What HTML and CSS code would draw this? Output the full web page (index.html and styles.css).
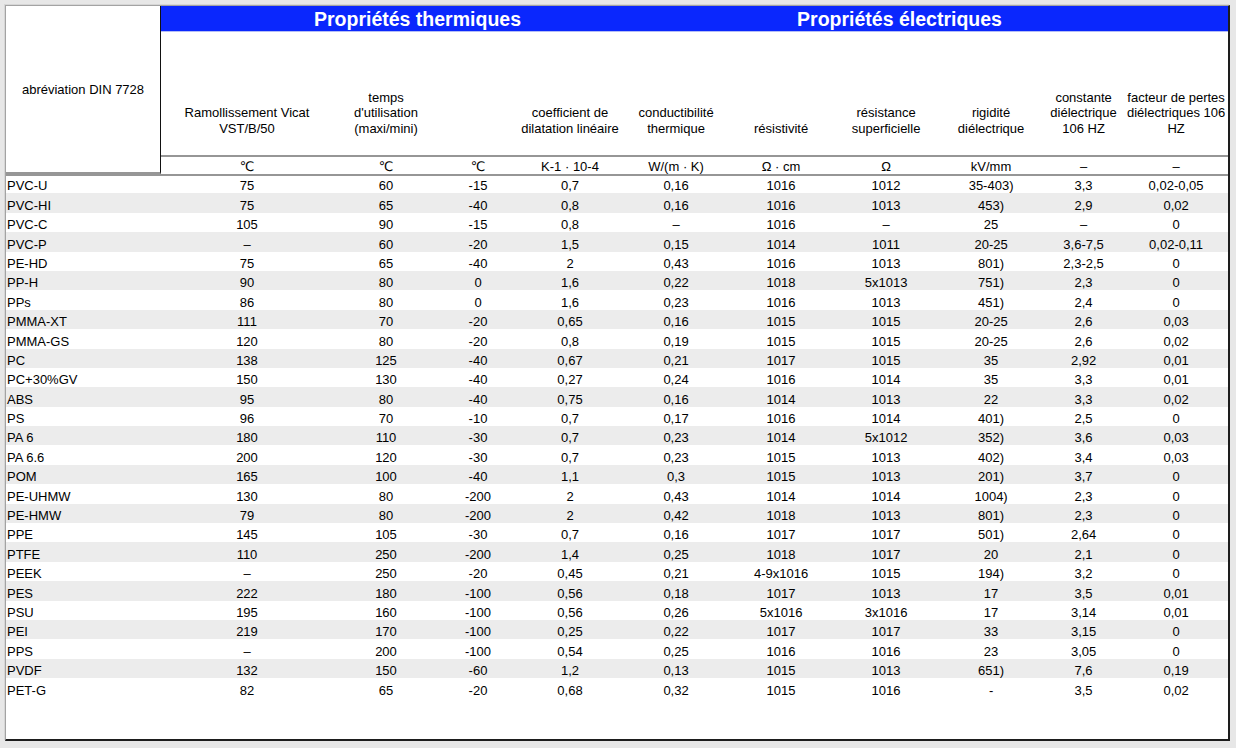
FILE: index.html
```html
<!DOCTYPE html>
<html lang="fr">
<head>
<meta charset="utf-8">
<title>Propriétés des plastiques</title>
<link rel="stylesheet" href="styles.css">
</head>
<body>
<div class="sheet">
<table class="grid">
<colgroup>
<col class="w0"><col class="w1"><col class="w2"><col class="w3"><col class="w4"><col class="w5"><col class="w6"><col class="w7"><col class="w8"><col class="w9"><col class="w10">
</colgroup>
<thead>
<tr class="band">
<th class="abbr" rowspan="3">abréviation DIN 7728</th>
<th class="title title-therm" colspan="5">Propriétés thermiques</th>
<th class="title title-elec" colspan="5">Propriétés électriques</th>
</tr>
<tr class="labels">
<th>Ramollissement Vicat<br>VST/B/50</th>
<th>temps<br>d'utilisation<br>(maxi/mini)</th>
<th></th>
<th>coefficient de<br>dilatation linéaire</th>
<th>conductibilité<br>thermique</th>
<th>résistivité</th>
<th>résistance<br>superficielle</th>
<th>rigidité<br>diélectrique</th>
<th>constante<br>diélectrique<br>106 HZ</th>
<th>facteur de pertes<br>diélectriques 106<br>HZ</th>
</tr>
<tr class="units">
<th>℃</th><th>℃</th><th>℃</th><th>K-1 · 10-4</th><th>W/(m · K)</th><th>Ω · cm</th><th>Ω</th><th>kV/mm</th><th>–</th><th>–</th>
</tr>
</thead>
<tbody>
<tr><td>PVC-U</td><td>75</td><td>60</td><td>-15</td><td>0,7</td><td>0,16</td><td>1016</td><td>1012</td><td>35-403)</td><td>3,3</td><td>0,02-0,05</td></tr>
<tr><td>PVC-HI</td><td>75</td><td>65</td><td>-40</td><td>0,8</td><td>0,16</td><td>1016</td><td>1013</td><td>453)</td><td>2,9</td><td>0,02</td></tr>
<tr><td>PVC-C</td><td>105</td><td>90</td><td>-15</td><td>0,8</td><td>–</td><td>1016</td><td>–</td><td>25</td><td>–</td><td>0</td></tr>
<tr><td>PVC-P</td><td>–</td><td>60</td><td>-20</td><td>1,5</td><td>0,15</td><td>1014</td><td>1011</td><td>20-25</td><td>3,6-7,5</td><td>0,02-0,11</td></tr>
<tr><td>PE-HD</td><td>75</td><td>65</td><td>-40</td><td>2</td><td>0,43</td><td>1016</td><td>1013</td><td>801)</td><td>2,3-2,5</td><td>0</td></tr>
<tr><td>PP-H</td><td>90</td><td>80</td><td>0</td><td>1,6</td><td>0,22</td><td>1018</td><td>5x1013</td><td>751)</td><td>2,3</td><td>0</td></tr>
<tr><td>PPs</td><td>86</td><td>80</td><td>0</td><td>1,6</td><td>0,23</td><td>1016</td><td>1013</td><td>451)</td><td>2,4</td><td>0</td></tr>
<tr><td>PMMA-XT</td><td>111</td><td>70</td><td>-20</td><td>0,65</td><td>0,16</td><td>1015</td><td>1015</td><td>20-25</td><td>2,6</td><td>0,03</td></tr>
<tr><td>PMMA-GS</td><td>120</td><td>80</td><td>-20</td><td>0,8</td><td>0,19</td><td>1015</td><td>1015</td><td>20-25</td><td>2,6</td><td>0,02</td></tr>
<tr><td>PC</td><td>138</td><td>125</td><td>-40</td><td>0,67</td><td>0,21</td><td>1017</td><td>1015</td><td>35</td><td>2,92</td><td>0,01</td></tr>
<tr><td>PC+30%GV</td><td>150</td><td>130</td><td>-40</td><td>0,27</td><td>0,24</td><td>1016</td><td>1014</td><td>35</td><td>3,3</td><td>0,01</td></tr>
<tr><td>ABS</td><td>95</td><td>80</td><td>-40</td><td>0,75</td><td>0,16</td><td>1014</td><td>1013</td><td>22</td><td>3,3</td><td>0,02</td></tr>
<tr><td>PS</td><td>96</td><td>70</td><td>-10</td><td>0,7</td><td>0,17</td><td>1016</td><td>1014</td><td>401)</td><td>2,5</td><td>0</td></tr>
<tr><td>PA 6</td><td>180</td><td>110</td><td>-30</td><td>0,7</td><td>0,23</td><td>1014</td><td>5x1012</td><td>352)</td><td>3,6</td><td>0,03</td></tr>
<tr><td>PA 6.6</td><td>200</td><td>120</td><td>-30</td><td>0,7</td><td>0,23</td><td>1015</td><td>1013</td><td>402)</td><td>3,4</td><td>0,03</td></tr>
<tr><td>POM</td><td>165</td><td>100</td><td>-40</td><td>1,1</td><td>0,3</td><td>1015</td><td>1013</td><td>201)</td><td>3,7</td><td>0</td></tr>
<tr><td>PE-UHMW</td><td>130</td><td>80</td><td>-200</td><td>2</td><td>0,43</td><td>1014</td><td>1014</td><td>1004)</td><td>2,3</td><td>0</td></tr>
<tr><td>PE-HMW</td><td>79</td><td>80</td><td>-200</td><td>2</td><td>0,42</td><td>1018</td><td>1013</td><td>801)</td><td>2,3</td><td>0</td></tr>
<tr><td>PPE</td><td>145</td><td>105</td><td>-30</td><td>0,7</td><td>0,16</td><td>1017</td><td>1017</td><td>501)</td><td>2,64</td><td>0</td></tr>
<tr><td>PTFE</td><td>110</td><td>250</td><td>-200</td><td>1,4</td><td>0,25</td><td>1018</td><td>1017</td><td>20</td><td>2,1</td><td>0</td></tr>
<tr><td>PEEK</td><td>–</td><td>250</td><td>-20</td><td>0,45</td><td>0,21</td><td>4-9x1016</td><td>1015</td><td>194)</td><td>3,2</td><td>0</td></tr>
<tr><td>PES</td><td>222</td><td>180</td><td>-100</td><td>0,56</td><td>0,18</td><td>1017</td><td>1013</td><td>17</td><td>3,5</td><td>0,01</td></tr>
<tr><td>PSU</td><td>195</td><td>160</td><td>-100</td><td>0,56</td><td>0,26</td><td>5x1016</td><td>3x1016</td><td>17</td><td>3,14</td><td>0,01</td></tr>
<tr><td>PEI</td><td>219</td><td>170</td><td>-100</td><td>0,25</td><td>0,22</td><td>1017</td><td>1017</td><td>33</td><td>3,15</td><td>0</td></tr>
<tr><td>PPS</td><td>–</td><td>200</td><td>-100</td><td>0,54</td><td>0,25</td><td>1016</td><td>1016</td><td>23</td><td>3,05</td><td>0</td></tr>
<tr><td>PVDF</td><td>132</td><td>150</td><td>-60</td><td>1,2</td><td>0,13</td><td>1015</td><td>1013</td><td>651)</td><td>7,6</td><td>0,19</td></tr>
<tr><td>PET-G</td><td>82</td><td>65</td><td>-20</td><td>0,68</td><td>0,32</td><td>1015</td><td>1016</td><td>-</td><td>3,5</td><td>0,02</td></tr>
</tbody>
</table>
</div>
</body>
</html>
```

FILE: styles.css
```css
html, body {
  margin: 0;
  padding: 0;
}

body {
  background: #e7e7e7;
  font-family: "Liberation Sans", Arial, "DejaVu Sans", sans-serif;
  font-size: 13px;
  color: #000;
}

.sheet {
  box-sizing: border-box;
  margin: 5px 0 0 5px;
  width: 1225px;
  height: 736px;
  background: #fff;
  border-left: 1px solid #a3a3a3;
  border-top: 1px solid #a3a3a3;
  border-right: 2px solid #1d1d1d;
  border-bottom: 2px solid #1d1d1d;
  box-shadow: -1px -1px 0 #d6d6d6;
  overflow: hidden;
}

.grid {
  border-collapse: separate;
  border-spacing: 0;
  table-layout: fixed;
  width: 1222px;
}

.w0 { width: 155px; }
.w1 { width: 172px; }
.w2 { width: 106px; }
.w3 { width: 78px; }
.w4 { width: 106px; }
.w5 { width: 106px; }
.w6 { width: 104px; }
.w7 { width: 106px; }
.w8 { width: 104px; }
.w9 { width: 81px; }
.w10 { width: 104px; }

.grid th {
  font-weight: normal;
  padding: 0;
  white-space: nowrap;
  text-align: center;
}

.abbr {
  border-right: 1px solid #111;
  border-bottom: 2px solid #969696;
  vertical-align: middle;
}

.band {
  height: 26px;
}

.grid .title {
  background: #0a27fd;
  color: #fff;
  font-weight: bold;
  font-size: 19.5px;
  text-align: left;
  vertical-align: middle;
  border-bottom: 1px solid #b4bdf6;
  line-height: 24px;
  padding-top: 1px;
}

.grid .title-therm {
  padding-left: 153px;
}

.grid .title-elec {
  padding-left: 68px;
}

.labels {
  height: 123px;
}

.labels th {
  vertical-align: bottom;
  line-height: 15.5px;
  padding-bottom: 19px;
}

.units {
  height: 19px;
}

.units th {
  border-top: 2px solid #969696;
  vertical-align: bottom;
  line-height: 15px;
}

.grid tbody tr {
  height: 19.4px;
}

.grid tbody tr:nth-child(even) {
  background: #ececec;
}

.grid tbody tr:first-child td {
  border-top: 2px solid #969696;
}

.grid td {
  padding: 0;
  text-align: center;
  vertical-align: bottom;
  line-height: 15px;
  white-space: nowrap;
}

.grid td:first-child {
  text-align: left;
  padding-left: 1px;
}
```
